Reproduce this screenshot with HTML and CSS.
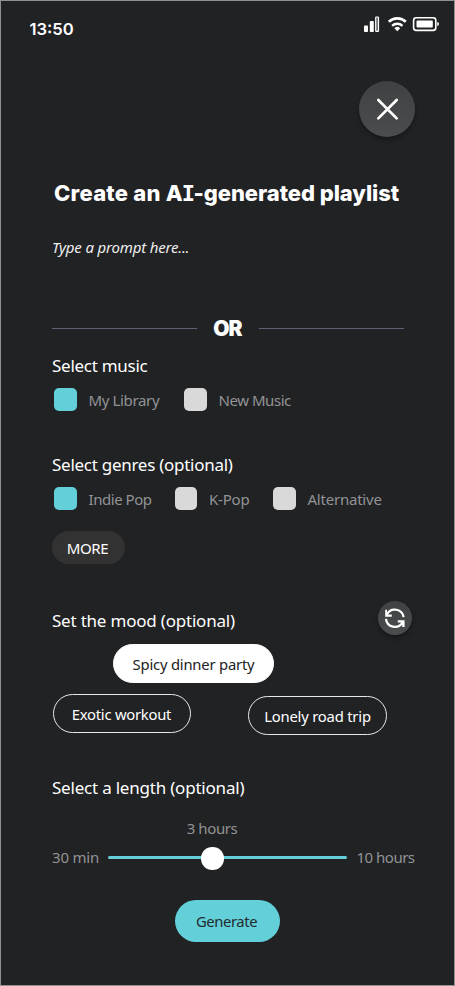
FILE: index.html
```
<!DOCTYPE html>
<html lang="en">
<head>
<meta charset="utf-8">
<title>Create playlist</title>
<link rel="stylesheet" href="styles.css">
</head>
<body>
<main class="screen">
  <header class="status">
    <span class="time">13:50</span>
    <svg class="status-icons" width="76" height="20" viewBox="0 0 76 20">
      <g fill="#fff">
        <rect x="1" y="11.5" width="4" height="6.5" rx=".8"/>
        <rect x="6.8" y="7" width="4" height="11" rx=".8"/>
        <rect x="12.7" y="3" width="2.8" height="14.3" rx=".6" fill="#65676a" stroke="#fff" stroke-width="1.2"/>
        <path d="M34.3 17.2l-2.9-3a4.2 4.2 0 0 1 5.8 0z"/>
        <rect x="53.5" y="6.6" width="16.3" height="7" rx="1"/>
        <path d="M74.2 8.2h.6a1 1 0 0 1 1 1v1.6a1 1 0 0 1-1 1h-.6z"/>
      </g>
      <g fill="none" stroke="#fff">
        <path d="M25.8 7.8a12.3 12.3 0 0 1 17 0" stroke-width="2.8"/>
        <path d="M29.1 11.8a7.5 7.5 0 0 1 10.4 0" stroke-width="2.4"/>
        <rect x="50.6" y="3.8" width="22.2" height="12.6" rx="2.6" stroke-width="1.6"/>
      </g>
    </svg>
  </header>

  <div class="close-row">
    <button class="round close" aria-label="Close">
      <svg width="56" height="56" viewBox="0 0 56 56"><path d="M19.3 19l18.4 18.4M37.7 19l-18.4 18.4" stroke="#fff" stroke-width="2.7" stroke-linecap="round"/></svg>
    </button>
  </div>

  <h1 class="title"><span class="lead">Create an </span>A<span class="slab">I</span>-generated playlist</h1>
  <p class="prompt">Type a prompt here...</p>

  <div class="divider"><span class="line"></span><strong class="or">OR</strong><span class="line"></span></div>

  <section class="music">
    <h2 class="heading h-music">Select music</h2>
    <div class="options">
      <label class="option o-library"><i class="box on"></i><span>My Library</span></label>
      <label class="option o-new"><i class="box"></i><span>New Music</span></label>
    </div>
  </section>

  <section class="genres">
    <h2 class="heading h-genres">Select genres (optional)</h2>
    <div class="options">
      <label class="option o-indie"><i class="box on"></i><span>Indie Pop</span></label>
      <label class="option o-kpop"><i class="box"></i><span>K-Pop</span></label>
      <label class="option o-alt"><i class="box"></i><span>Alternative</span></label>
    </div>
    <button class="more"><span>MORE</span></button>
  </section>

  <section class="mood">
    <div class="mood-head">
      <h2 class="heading h-mood">Set the mood (optional)</h2>
      <button class="round refresh" aria-label="Refresh">
        <svg width="34" height="34" viewBox="0 0 34 34">
          <g fill="none" stroke="#fff" stroke-width="2.2">
            <path d="M9 13.2A8.9 8.9 0 0 1 25.6 16.2"/>
            <path d="M8 17.8A8.9 8.9 0 0 0 24.6 21.4"/>
          </g>
          <path fill="#fff" d="M7.2 8.8v6.9h6.6v-2.2H10.2L9 12V8.8zM26.6 26v-6.7h-6.8v2.2h3l1.4 1.7V26z"/>
        </svg>
      </button>
    </div>
    <button class="chip selected"><span>Spicy dinner party</span></button>
    <div class="chips">
      <button class="chip exotic"><span>Exotic workout</span></button>
      <button class="chip lonely"><span>Lonely road trip</span></button>
    </div>
  </section>

  <section class="length">
    <h2 class="heading h-length">Select a length (optional)</h2>
    <div class="value"><span>3 hours</span></div>
    <div class="slider">
      <span class="min">30 min</span>
      <div class="track"><i class="knob"></i></div>
      <span class="max">10 hours</span>
    </div>
  </section>

  <button class="generate"><span>Generate</span></button>
</main>
</body>
</html>
```
FILE: styles.css
```
* { box-sizing: border-box; margin: 0; padding: 0; }
body {
  background: #212224;
  color: #fff;
  font: 15px/20px "Noto Sans", sans-serif;
}
button { border: 0; font: inherit; color: inherit; background: none; display: flex; align-items: center; justify-content: center; white-space: nowrap; }
.screen {
  width: 455px;
  height: 986px;
  border: 1px solid #8e9092;
  overflow: hidden;
  display: flex;
  flex-direction: column;
  white-space: nowrap;
}
.status { height: 80px; padding: 14px 15px 0 28.5px; display: flex; justify-content: space-between; flex: none; }
.time { font: 600 16.6px/28px Inter, sans-serif; }
.status-icons { display: block; margin-top: -1px; }
.close-row { height: 92px; display: flex; justify-content: flex-end; padding-right: 39px; flex: none; }
.round { border-radius: 50%; background: linear-gradient(#404142, #4b4c4d); box-shadow: 0 3px 4px rgba(0, 0, 0, .3); flex: none; }
.close { width: 56px; height: 56px; }
.title { height: 40px; padding-left: 53px; font: 800 22px/40px Inter, sans-serif; letter-spacing: -.05px; flex: none; }
.lead { letter-spacing: .25px; }
.slab { font-family: "DejaVu Sans Mono", monospace; font-weight: 700; margin: 0 -1.5px 0 -1px; }
.prompt { margin-top: 24px; height: 20px; padding-left: 51px; font-size: 15px; letter-spacing: -.18px; line-height: 20px; font-style: italic; color: #eee; flex: none; }
.divider { margin: 60px 50px 0 51px; height: 22px; display: flex; align-items: center; justify-content: space-between; flex: none; }
.line { width: 145px; height: 1px; background: #606078; }
.or { font: 900 21px/22px Inter, sans-serif; letter-spacing: -.8px; margin-left: -1px; padding-top: 1px; }
.heading { font-size: 17px; letter-spacing: -.27px; line-height: 24px; font-weight: 400; }
.h-mood, .h-length { letter-spacing: -.21px; }
.music { margin: 14.5px 0 0 51px; height: 99px; flex: none; }
.options { display: flex; margin-top: 11px; padding-left: 2px; height: 22px; }
.option { display: flex; align-items: center; gap: 12px; color: #929395; line-height: 22px; letter-spacing: -.36px; }
.o-indie { letter-spacing: -.45px; }
.o-new { letter-spacing: -.45px; }
.o-kpop { letter-spacing: -.2px; }
.o-alt { letter-spacing: -.22px; }
.box { width: 22.5px; height: 22.5px; border-radius: 5px; background: #d9d9d9; flex: none; }
.box.on { background: #63cfd9; }
.o-library { width: 130px; }
.o-indie { width: 120.5px; }
.o-kpop { width: 98.5px; }
.genres { margin-left: 51px; height: 148.5px; flex: none; }
.more { margin-top: 21.5px; width: 73px; height: 33px; padding-right: 2px; border-radius: 17px; background: #323232; letter-spacing: -.4px; }
.mood { padding-left: 51px; height: 174px; flex: none; }
.mood-head { display: flex; justify-content: space-between; align-items: center; padding-right: 42px; height: 34px; margin-bottom: 9px; }
.h-mood { margin-top: 5px; }
.refresh { width: 34px; height: 34px; }
.chip { height: 39px; border-radius: 20px; border: 1px solid #e8e8e8; font-size: 14.8px; letter-spacing: -.2px; }
.selected { margin-left: 61px; width: 161px; background: #fff; border-color: #fff; color: #222; }
.chips { display: flex; margin-top: 11px; gap: 57px; padding-left: 1px; }
.exotic { width: 138px; padding-right: 1px; letter-spacing: -.25px; }
.lonely { width: 139px; margin-top: 2px; }
.length { padding-left: 51px; height: 125px; flex: none; color: #fff; }
.h-length { padding-top: 1px; }
.value { width: 320px; text-align: center; margin-top: 16px; line-height: 24px; color: #929395; letter-spacing: -.4px; }
.slider { display: flex; align-items: center; height: 24px; margin-top: 5px; color: #929395; letter-spacing: -.2px; }
.max { letter-spacing: -.5px; }
.min { width: 56px; }
.track { width: 239px; height: 3px; border-radius: 2px; background: #63cfd9; position: relative; margin-right: 9.5px; }
.knob { position: absolute; left: 93px; top: -8.5px; width: 22.5px; height: 22.5px; border-radius: 50%; background: #fff; }
.generate { margin-left: 173.5px; width: 105px; height: 42px; padding-right: 1px; border-radius: 21px; background: #63cfd9; color: #222b2d; font-size: 14.8px; letter-spacing: -.4px; flex: none; }
```
